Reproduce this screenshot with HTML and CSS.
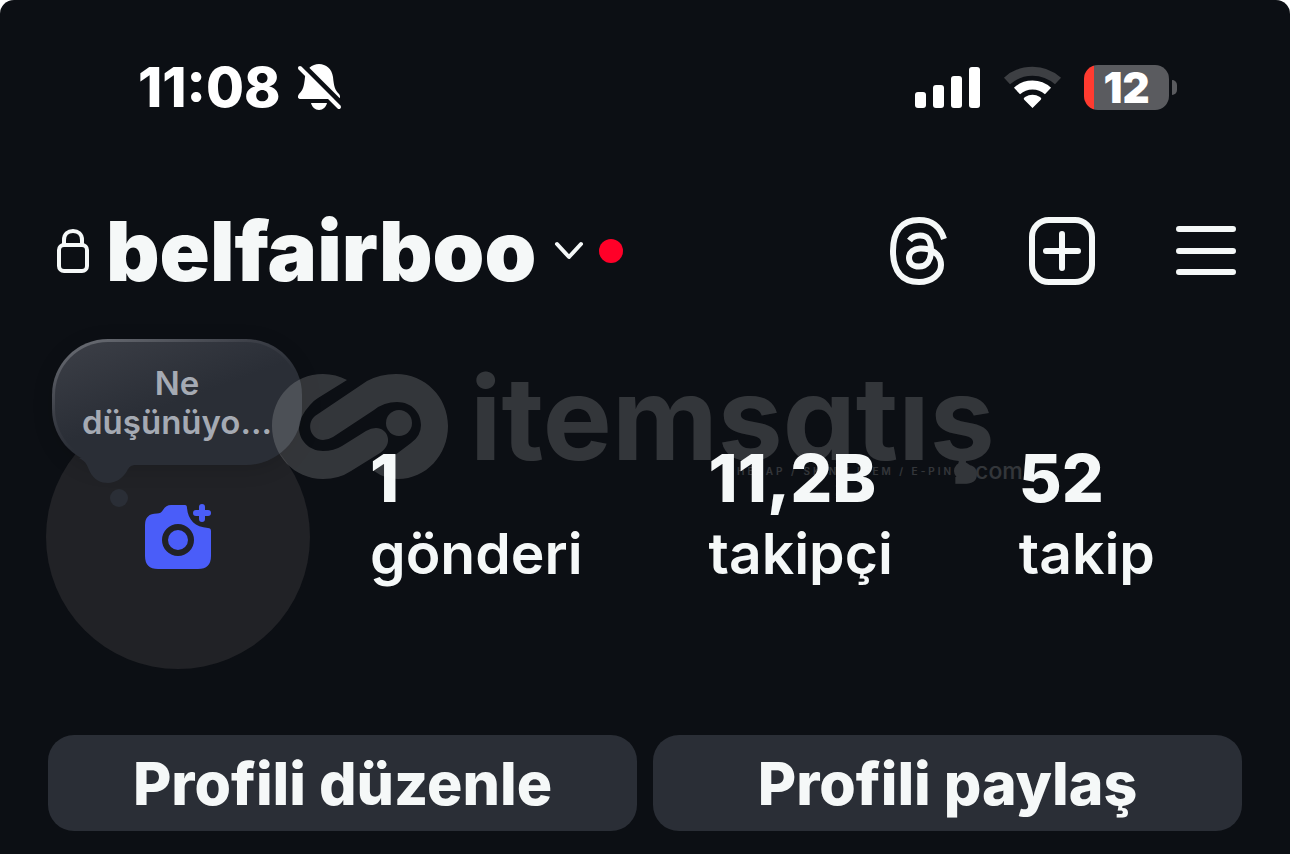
FILE: index.html
```html
<!doctype html>
<html lang="tr">
<head>
    <meta charset="UTF-8">
    <meta name="viewport" content="width=device-width, initial-scale=1.0">
    <title>belfairboo</title>
    <link rel="stylesheet" href="styles.css">
</head>
<body>
<div class="screen">
    <div class="status">
        <span class="time">11:08</span>
        <svg class="bell" width="46" height="48" viewBox="0 0 46 48">
            <path fill="#fff" d="M22 1C29 1 35 6 36 14C37 24 38 27 42 31C44 34 43 36 40 36H4C1 36 0 34 2 31C6 27 7 24 8 14C9 6 15 1 22 1Z"/>
            <path fill="#fff" d="M14 40H30C29 44 26 47 22 47S15 44 14 40Z"/>
            <path stroke="#0c0f14" stroke-width="5" d="M4 0L46 42"/>
            <path stroke="#fff" stroke-width="4" stroke-linecap="round" d="M3 5L42 44"/>
        </svg>
        <div class="signals">
            <svg width="66" height="42" viewBox="0 0 66 42" fill="#fff">
                <rect x="0" y="26" width="11" height="16" rx="3"/>
                <rect x="18" y="19" width="11" height="23" rx="3"/>
                <rect x="36" y="10" width="11" height="32" rx="3"/>
                <rect x="54" y="1" width="11" height="41" rx="3"/>
            </svg>
            <svg width="59" height="44" viewBox="0 0 59 44" fill="none">
                <path stroke="#3d3f43" stroke-width="9" d="M4 16A38 38 0 0 1 55 16"/>
                <path stroke="#fff" stroke-width="9" d="M14 26A23 23 0 0 1 45 26"/>
                <path fill="#fff" d="M29.500 43L21 34.500Q20 33 22 32Q29.500 27.500 37 32Q39 33 38 34.500Z"/>
            </svg>
            <div class="battery"><span class="level">12</span></div>
        </div>
    </div>

    <div class="topbar">
        <svg class="lock" width="34" height="46" viewBox="0 0 34 46" fill="none" stroke="#f5f8f8" stroke-width="4">
            <rect x="3" y="17" width="28" height="26" rx="5"/>
            <path d="M8 17V12C8 6 12 3 17 3S26 6 26 12V17"/>
        </svg>
        <h1 class="username">belfairboo</h1>
        <svg class="chevron" width="30" height="20" viewBox="0 0 30 20" fill="none" stroke="#f5f8f8" stroke-width="4" stroke-linecap="round" stroke-linejoin="round">
            <path d="M3 3L15 16L27 3"/>
        </svg>
        <span class="dot"></span>
        <div class="tools">
            <button type="button" aria-label="Threads">
                <svg width="60" height="70" viewBox="0 0 60 70" fill="none" stroke="#f5f8f8" stroke-width="6">
                    <path d="M56 23C52 10 44 4 31 4C14 4 5 15 5 35S14 66 31 66C44 66 53 58 53 49C53 38 43 32 32 32.500C26 33 21 36 21 42C21 47 25 50.500 31 50.500C39 50.500 43 44 43 35C43 24 40 19.500 32 19.500C27 19.500 24 21 21.500 24.500"/>
                </svg>
            </button>
            <button type="button" aria-label="Yeni">
                <svg width="66" height="70" viewBox="0 0 66 70" fill="none" stroke="#f5f8f8" stroke-width="6" stroke-linecap="round">
                    <rect x="3" y="4" width="60" height="62" rx="17"/>
                    <path d="M33 18V52M17 35H49"/>
                </svg>
            </button>
            <button type="button" aria-label="Menü">
                <svg width="60" height="70" viewBox="0 0 60 70" fill="none" stroke="#f5f8f8" stroke-width="6" stroke-linecap="round">
                    <path d="M3 13H57M3 35H57M3 56H57"/>
                </svg>
            </button>
        </div>
    </div>

    <div class="profile">
        <div class="avatar">
            <svg width="66" height="66" viewBox="0 0 66 66">
                <path fill="#4a5df9" d="M0 21Q0 9.500 12 9.500Q16 9.500 18 6Q21 1 26 1H40Q42 1 42 4C43 16 50 23 63 24Q66 24 66 27V52Q66 65 53 65H13Q0 65 0 52Z"/>
                <circle cx="33" cy="36" r="13" fill="none" stroke="#212226" stroke-width="6"/>
                <path stroke="#4a5df9" stroke-width="6" stroke-linecap="round" d="M57 3V15M51 9H63"/>
            </svg>
            <div class="note">
                <svg class="tail" width="60" height="50" viewBox="0 0 60 50" fill="#2a2e36">
                    <path d="M0 0C8 4 8 8 11 14C15 22 22 25 29 25C37 25 44 20 48 13C50 9 52 7 57 7V0Z"/>
                    <circle cx="40" cy="40" r="9"/>
                </svg>
                <button type="button" class="bubble">Ne<br>düşünüyo...</button>
            </div>
        </div>
        <div class="stats">
            <a href="#"><strong>1</strong><span>gönderi</span></a>
            <a href="#"><strong>11,2B</strong><span>takipçi</span></a>
            <a href="#"><strong>52</strong><span>takip</span></a>
        </div>
        <div class="watermark">
            <svg width="176" height="106" viewBox="0 0 176 106" fill="#fff">
                <path d="M75 6Q64 0 51 0C22 0 0 23 0 52S22 105 51 105Q67 105 79 97L108 79C122 70 116 54 104 54Q99 54 94 57L70 72Q62 77 51 77C37 77 27 66 27 54Q27 43 38 31Q41 27 46 24Z"/>
                <path d="M43 42C33 51 40 66 51 66Q56 66 61 63L102 36Q112 28 125 28C140 28 149 39 149 51Q149 62 139 69L102 97Q113 105 126 105C154 105 176 81 176 52S153 0 124 0Q108 0 95 7Z"/>
                <circle cx="127" cy="49" r="13"/>
            </svg>
            <div class="brand">
                <span class="word">itemsatış</span>
                <div class="sub"><span class="tags">HESAP / SKIN / ITEM / E-PIN</span><i class="point"></i><span class="com">com</span></div>
            </div>
        </div>
    </div>

    <div class="actions">
        <button type="button">Profili düzenle</button>
        <button type="button">Profili paylaş</button>
    </div>
</div>
</body>
</html>
```
FILE: styles.css
```css
*{
    padding: 0;
    margin: 0;
    box-sizing: border-box;
}
body{
    background-color: #fff;
    font-family: Inter, "Liberation Sans", sans-serif;
    color: #f5f8f8;
}
button{
    border: none;
    background: none;
    font-family: inherit;
    color: inherit;
    cursor: pointer;
}
a{
    color: inherit;
    text-decoration: none;
}
svg{
    display: block;
    flex: none;
}
.screen{
    min-height: 100vh;
    background-color: #0c0f14;
    border-radius: 14px 14px 0 0;
}

/* status bar */
.status{
    display: flex;
    align-items: center;
    padding: 50px 121px 0 138px;
    height: 124px;
    color: #fff;
}
.time{
    font-size: 55px;
    font-weight: 800;
}
.bell{
    margin-left: 16px;
}
.signals{
    display: flex;
    align-items: center;
    gap: 22px;
    margin-left: auto;
}
.battery{
    position: relative;
    width: 85px;
    height: 45px;
    border-radius: 14px;
    background: linear-gradient(90deg, #ff3b30 10px, #5a5b5f 10px);
    text-align: center;
}
.battery:after{
    content: "";
    position: absolute;
    right: -8px;
    top: 15px;
    width: 5px;
    height: 15px;
    border-radius: 0 8px 8px 0;
    background-color: #5a5b5f;
}
.level{
    font-size: 42px;
    font-weight: 900;
    line-height: 45px;
}

/* user name and tools */
.topbar{
    display: flex;
    align-items: center;
    padding: 76px 54px 0 56px;
    height: 177px;
}
.username{
    margin-left: 16px;
    font-size: 83px;
    font-weight: 900;
    line-height: 98px;
}
.chevron{
    margin-left: 18px;
}
.dot{
    width: 24px;
    height: 24px;
    margin-left: 15px;
    border-radius: 50%;
    background-color: #ff0028;
}
.tools{
    display: flex;
    gap: 81px;
    margin-left: auto;
}

/* avatar, note, counters */
.profile{
    position: relative;
    display: flex;
    gap: 60px;
    padding: 104px 48px 0 46px;
}
.avatar{
    position: relative;
    display: flex;
    align-items: center;
    justify-content: center;
    flex: none;
    width: 264px;
    height: 264px;
    border-radius: 50%;
    background-color: #212226;
}
.note{
    position: absolute;
    left: 6px;
    top: -66px;
}
.bubble{
    width: 250px;
    height: 126px;
    padding-top: 2px;
    border: 3px solid transparent;
    border-radius: 56px;
    background: linear-gradient(160deg, #3c3f47 0%, #2a2e36 50%) padding-box,
                linear-gradient(160deg, #70737a 0%, #3c3f47 35%, #2a2e36 55%) border-box;
    box-shadow: 0 4px 20px rgba(0,0,0,.15);
    font-size: 33px;
    font-weight: 600;
    line-height: 39px;
    color: #a5aab3;
}
.tail{
    position: absolute;
    left: 27px;
    top: 119px;
    z-index: 1;
}
.stats{
    display: flex;
    gap: 126px;
    padding-top: 36px;
}
.stats strong,
.stats span{
    display: block;
    line-height: 75px;
}
.stats strong{
    font-size: 66px;
    font-weight: 800;
}
.stats span{
    font-size: 57px;
    font-weight: 600;
}
.watermark{
    position: absolute;
    left: 272px;
    top: 73px;
    display: flex;
    gap: 22px;
    color: #fff;
    opacity: .16;
    pointer-events: none;
}
.word{
    display: block;
    font-size: 116px;
    font-weight: 700;
    line-height: 88px;
    font-feature-settings: "cv11";
}
.sub{
    display: flex;
    align-items: center;
    justify-content: flex-end;
    margin-right: -28px;
}
.tags{
    font-size: 10px;
    font-weight: 600;
    letter-spacing: 3px;
}
.point{
    width: 18px;
    height: 18px;
    margin-right: 3px;
    border-radius: 50%;
    background-color: #fff;
}
.com{
    font-size: 23px;
    font-weight: 500;
    line-height: 18px;
}

/* buttons */
.actions{
    display: flex;
    gap: 16px;
    padding: 66px 48px 23px;
}
.actions button{
    flex: 1;
    height: 96px;
    border-radius: 26px;
    background-color: #2a2e36;
    font-size: 59px;
    font-weight: 800;
}
```
